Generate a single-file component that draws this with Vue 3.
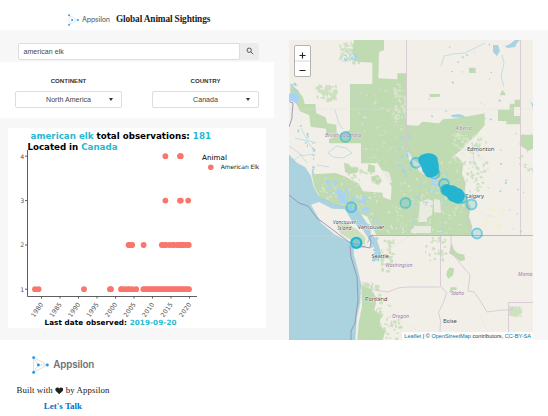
<script setup>
const years = [1980, 1985, 1990, 1995, 2000, 2005, 2010, 2015, 2020]
const yearX = (year) => 41.5 + (year - 1980) * 3.7
const span = (from, to, step) => {
  const out = []
  for (let x = from; x <= to; x += step) out.push(x)
  return out
}
const rows = [
  { n: 4, y: 156.2, xs: [165.4, 180, 180.8] },
  { n: 3, y: 200.6, xs: [165.4, 180, 180.8, 188.2] },
  { n: 2, y: 245, xs: [128.6, 129.6, 131.2, 132.2, 143.6, 161.8, 163.5, 166, 169.5, 172.5, 173.8, 177, 179, 180.8, 182.6, 184, 187, 188.8] },
  { n: 1, y: 289.2, xs: [35, 38.6, 84, 110, 111, 121, 122, 125, 128, 129.3, 132.4, 136.2, ...span(143.4, 189, 1.9), 189] },
]

/* deterministic scatter for forest texture and small lakes */
let seed = 11
const rnd = () => {
  seed = (seed * 16807) % 2147483647
  return seed / 2147483647
}
const scatter = (count, x, y, w, h, r) => {
  let d = ''
  for (let i = 0; i < count; i++) {
    const px = x + rnd() * w
    const py = y + rnd() * h
    const a = r * (0.4 + rnd())
    const b = r * (0.4 + rnd())
    d += `M${px.toFixed(1)} ${py.toFixed(1)}l${a.toFixed(1)} ${(b * 0.4).toFixed(1)} ${(-a * 0.3).toFixed(1)} ${b.toFixed(1)} ${(-a).toFixed(1)} ${(-b * 0.4).toFixed(1)}z`
  }
  return d
}
const clearings = scatter(80, 358, 88, 44, 75, 1.4) + scatter(110, 398, 155, 65, 78, 1.8) + scatter(50, 392, 83, 14, 36, 2.4) + scatter(60, 452, 130, 30, 30, 2.4) + scatter(90, 318, 176, 62, 46, 2) + scatter(30, 385, 205, 22, 28, 1.6)
const groves =
  scatter(65, 316, 84, 20, 14, 2.4) + scatter(55, 339, 41, 22, 20, 2.6) +
  scatter(60, 464, 135, 24, 55, 2.2) + scatter(70, 360, 282, 20, 56, 3.2) +
  scatter(26, 381, 238, 12, 32, 3) + scatter(35, 376, 304, 24, 34, 2.5) +
  scatter(30, 425, 236, 22, 24, 2.2) + scatter(24, 345, 165, 30, 14, 2.6) +
  scatter(16, 518, 132, 15, 40, 2.2) + scatter(45, 509, 306, 11, 9, 2.4)
const lakes =
  scatter(45, 415, 165, 33, 40, 1.7) + scatter(12, 398, 160, 14, 16, 2.2) +
  scatter(12, 396, 134, 14, 22, 2) + scatter(10, 343, 50, 12, 10, 2.4) +
  scatter(22, 420, 42, 112, 80, 1.5) + scatter(14, 480, 125, 50, 110, 1.4) +
  scatter(10, 290, 82, 6, 12, 2.4) + scatter(6, 295, 120, 14, 30, 2) + scatter(18, 370, 236, 6, 24, 2) + scatter(12, 312, 142, 2, 40, 2)
const deepLakes = scatter(16, 326, 178, 10, 14, 2.6) + scatter(22, 337, 186, 12, 14, 2.8) + scatter(22, 350, 194, 18, 16, 2.8) + scatter(10, 362, 208, 18, 18, 1.8) + scatter(14, 430, 176, 10, 10, 2)
const fields = scatter(28, 480, 205, 28, 24, 2.6) + scatter(14, 411, 252, 22, 32, 1.8) + scatter(6, 405, 272, 14, 16, 2)

const elkCluster = [
  [424, 160], [427, 159], [430, 159], [432, 160], [426, 163], [429, 163], [432, 163], [427, 166], [430, 166],
  [433, 165], [428, 169], [431, 169], [433, 168], [430, 172], [433, 171], [429, 161], [431, 165], [429, 168],
]
const parkCluster = [
  [447, 190], [449, 191], [451, 193], [453, 194], [455, 195], [457, 196], [459, 196], [452, 191], [455, 193],
  [458, 194], [453, 196], [456, 197], [458, 198], [454, 192], [450, 192], [457, 195],
]
const solid = [...elkCluster, ...parkCluster]
const rings = [[345.5, 137], [416, 162.7], [351.3, 207.3], [405.5, 203], [471.5, 204.5], [477, 233.5], [444, 184], [434.5, 173.5], [446, 190], [462, 198]]
</script>

<template>
  <div class="page">
    <header class="top">
      <svg class="mark" viewBox="0 0 32 34">
        <path d="M3 3v28L29 17zM3 3l9 14L3 31M12 17h17" />
        <circle cx="3" cy="3" r="2.7" /><circle cx="3" cy="31" r="2.7" /><circle cx="12" cy="17" r="2.7" /><circle cx="29" cy="17" r="2.7" />
      </svg>
      <span class="brand">Appsilon</span>
      <h1>Global Animal Sightings</h1>
    </header>

    <main class="body">
      <section class="side">
        <div class="search">
          <div class="field">american elk</div>
          <div class="go">
            <svg viewBox="0 0 10 10"><circle cx="4" cy="4" r="2.7" /><path d="M6 6l3 3" /></svg>
          </div>
        </div>
        <div class="filters">
          <div class="filter">
            <label>CONTINENT</label>
            <div class="select"><span>North America</span><i></i></div>
          </div>
          <div class="filter">
            <label>COUNTRY</label>
            <div class="select"><span>Canada</span><i></i></div>
          </div>
        </div>
        <div class="card">
          <svg class="chart" viewBox="8 128 258 200">
            <g class="title">
              <text x="30.5" y="139" textLength="180.500">  <tspan class="hl">american elk</tspan> total observations: <tspan class="hl">181</tspan></text>
              <text x="27.5" y="150" textLength="90">Located in <tspan class="hl">Canada</tspan></text>
            </g>
            <path class="axis" d="M27.5 150v146.5H197" />
            <g v-for="row in rows" :key="row.n">
              <path class="axis" :d="`M25 ${row.y}h2.5`" />
              <text class="tick" x="24.3" :y="row.y + 2.4" text-anchor="end">{{ row.n }}</text>
              <circle v-for="(x, i) in row.xs" :key="i" class="dot" :cx="x" :cy="row.y" r="2.9" />
            </g>
            <g v-for="year in years" :key="year">
              <path class="axis" :d="`M${yearX(year)} 296.5v2`" />
              <text class="tick" text-anchor="end" :transform="`translate(${yearX(year) + 2} 304.5) rotate(-55)`">{{ year }}</text>
            </g>
            <text class="legend" x="202" y="160" textLength="25">Animal</text>
            <circle class="dot" cx="210.8" cy="167.2" r="2.8" />
            <text class="entry" x="220.7" y="169.2" textLength="38.5">American Elk</text>
            <text class="caption" x="44.5" y="325" textLength="132">Last date observed: <tspan class="hl">2019-09-20</tspan></text>
          </svg>
        </div>
      </section>

      <section class="map">
        <svg class="tiles" viewBox="289 40 244 300">
          <rect class="land" x="289" y="40" width="244" height="300" />
          <g transform="translate(289 40) scale(.33333)">
            <path class="wood" d="M195 0H285V30L270 36 268 115 325 118V100H352V255L388 257 400 245 450 250 462 238 510 234 587 220V255L562 285 540 305 522 325 498 345 524 368 519 400 530 430 526 465 545 500 540 530 550 560 545 586H262L250 560 235 530 190 510 130 492 92 470 76 440 68 403 140 399 170 410 208 430 222 454 280 458 282 472 305 480 308 440 290 410 266 370H216V310H120V297L150 285 183 270V132H250V68L205 65 190 38z" />
            <path class="wood" d="M5 130l22 22 15 20 5 20h32l3 28 28 12 4 18 28 4 2 42-30-8-3-22-46-6-4-34-28-12-14-28-16-8zM165 368l15 4 6 12 22-2-4 16-22 4-14-6zM238 372l20 6 0 20-22-4zM245 410l22-6 12 18-10 14-16-8zM627 209h35v-18h15v-12h17v22h-19v27h19v25h-42v-10h-25zM695 284h37v42l-14 6-23-14zM540 83h20v16h-20zM421 162h32v8l-30 2zM640 150l10 12-2 4h-16zM218 740l28 6 18 30-8 34 20 20-6 26 20 16-10 28H205l4-50 10-50zM474 694l8-12 14 4-4 20-14 10-6-10zM480 640l8-30 8 20 10 10 20 4 2 16-14 4-16-14zM485 742h18v8h-12v8h-10z" />
          </g>
          <path class="grove" :d="groves" />
          <path class="clear" :d="clearings" />
          <path class="clear solid" d="M420 202l8-3 5 2-1 14-5 3v4h-9zM434 199l6 1 1 13-7-1zM411 230l4-4h16v7h-20zM407 147l6 12 16 10 10 11-4 1-15-9-11-12zM381 170l8 2 3 10-5 3z" />
          <path class="field-patch" :d="fields" />
          <g transform="translate(289 40) scale(.33333)">
            <path class="sea" d="M0 345L25 370 48 382 65 408 73 440 88 468 130 490 182 504 214 520 230 545 243 560 245 584 262 596 276 640 268 665 260 645 256 620 243 600 225 622 193 624 194 645 206 690 215 728 213 790 203 830 198 900H0z" />
            <path class="isle" d="M66 494L90 486 130 506 168 508 190 545 222 570 238 595 233 614 212 622 180 605 135 582 97 550 78 515z" />
            <path class="wood soft" d="M142 552l30-2 34 20 24 24-2 18-16 6-30-20-28-18z" />
          </g>
          <path class="water" :d="lakes" />
          <path class="deep" :d="deepLakes" />
          <path class="deep" d="M289 94l8-1 3 5-3 6-5-3-3 1z" />
          <path class="water" d="M493 45h5l2 6-3 5-4-4zM515 40h5l-3 3-2 4-8 1-2-2 5-2zM451 115l8-1 6 2-1 2-12-1zM530 101l3 3v4z" />
          <path class="river" d="M350 86l5 11 9 13 6 11M364 110l12-5 14 1M335 110l4 14 4 5M328 153l8-7 10 2 6 5-9 5-10-1zM295 138l12 3 6 8M301 128l6 12 9 3M301 156l12-2M317 165l12 2M294 160l8-6M441 66l3-10 9-2 12-1 10-5 10-5M502 55l2 8-3 14 3 10M289 146l10 7 8 10M472 142l2 20M416 195l-3 20v14M444 215l-2 20" />
          <path class="minor" d="M289 109h244M289 236h72M461 197l13 13 23 8M375 252l20-6 14-10M420 210l-2 22M400 320l20 12M480 315l10 22" />
          <path class="border" d="M406.500 40V147L413 159 424 166 436 178 446 190 458 203 467 211 469 225 472 236M520.500 40V236" />
          <path class="border strong" d="M371 235.500H533" />
          <path class="border" d="M362 283h6l6 7 14 2 10-4 10-1h31.500M440.500 236v50.500l6 6-3 10-5 10 2 8-1 20M451 236v15l7 10 12 14-2 16 6 1 7 10 6 10 15-2 10 0 0-3 5 0M508.500 340V302.500H533" />
          <path class="shore" d="M289 195l10 8 9 3 9 12 16 12 16 12 16 5 5 1 1-7-2-4 4-2M350 246l1 11 6 20 1 23-3 23-4 8v9M290 102l3 1-1 12 0 3-3 9" />
          <g class="region">
            <text x="325" y="137" textLength="36">British Columbia</text>
            <text x="455.500" y="130" textLength="16">Alberta</text>
            <text x="385.500" y="267" textLength="27">Washington</text>
            <text x="392" y="318" textLength="17">Oregon</text>
            <text x="451.500" y="295" textLength="12.500">Idaho</text>
            <text x="518" y="276">Monta</text>
          </g>
          <g class="city">
            <text x="467" y="151" textLength="27.500">Edmonton</text>
            <text x="465" y="198" textLength="19">Calgary</text>
            <text x="357.500" y="229.300" textLength="27">Vancouver</text>
            <text class="small" x="333" y="224" textLength="23">Vancouver</text>
            <text class="small" x="337.500" y="230" textLength="14">Island</text>
            <text x="371.500" y="258" textLength="17.500">Seattle</text>
            <text x="365" y="300.500" textLength="22.500">Portland</text>
            <text x="443" y="323" textLength="14">Boise</text>
          </g>
          <g class="cluster">
            <circle v-for="(p, i) in solid" :key="i" :cx="p[0]" :cy="p[1]" r="4.900" />
          </g>
          <g class="sighting">
            <circle v-for="(p, i) in rings" :key="i" :cx="p[0]" :cy="p[1]" r="5" />
            <circle class="busy" cx="356.300" cy="242.800" r="5" />
          </g>
        </svg>
        <div class="zoom">
          <svg viewBox="0 0 15 30"><path d="M7.500 6.500v6M4.500 9.500h6M4.500 24.500h6" /><path class="split" d="M0 15h15" /></svg>
        </div>
        <div class="credit"><a>Leaflet</a> | © <a>OpenStreetMap</a> contributors, <a>CC-BY-SA</a></div>
      </section>
    </main>

    <footer class="foot">
      <div class="logo">
        <svg class="mark" viewBox="0 0 32 34">
          <path d="M3 3v28L29 17zM3 3l9 14L3 31M12 17h17" />
          <circle cx="3" cy="3" r="2.7" /><circle cx="3" cy="31" r="2.7" /><circle cx="12" cy="17" r="2.7" /><circle cx="29" cy="17" r="2.7" />
        </svg>
        <span class="brand">Appsilon</span>
      </div>
      <p>Built with <svg class="heart" viewBox="0 0 10 9"><path d="M5 8.600L.9 4.700C-.5 2.600.8.500 2.700.5 3.800.5 4.600 1.100 5 1.900 5.400 1.100 6.200.5 7.300.5 9.200.5 10.500 2.600 9.100 4.700z" /></svg> by Appsilon</p>
      <a class="talk">Let's Talk</a>
    </footer>
  </div>
</template>

<style>
body { margin: 0; background: #fff; overflow: hidden; }
</style>

<style scoped>
.page { width: 548px; height: 416px; font-family: "Liberation Sans", Arial, sans-serif; color: #333; overflow: hidden; }
.page * { box-sizing: border-box; }
.top { height: 30px; display: flex; align-items: center; padding: 9px 0 0 68px; }
.mark { fill: #1996f0; flex: none; }
.mark path { fill: none; stroke: #b9c3c9; stroke-width: 1; }
.top .mark { width: 11px; height: 12px; }
.brand { color: #6b737a; font-family: Inter, sans-serif; font-weight: 500; }
.top .brand { font-size: 7px; margin-left: 3px; width: 34px; letter-spacing: -.2px; white-space: nowrap; }
h1 { margin: -1px 0 0; font: bold 9.3px/12px "Liberation Serif", serif; letter-spacing: -.13px; color: #222; white-space: nowrap; }
.body { height: 310px; display: flex; background: #f7f7f7; }
.side { width: 274px; flex: none; }
.search { height: 32px; display: flex; padding: 12.5px 15px 2.500px 17.500px; }
.field { flex: 1; height: 17px; border: 1px solid #ddd; border-radius: 2px 0 0 2px; background: #fff; font-size: 7px; line-height: 16px; padding-left: 5px; letter-spacing: .05px; color: #444; }
.go { width: 19px; height: 17px; background: #ececec; border-radius: 0 2px 2px 0; display: flex; align-items: center; justify-content: center; }
.go svg { width: 8px; height: 8px; fill: none; stroke: #444; stroke-width: 1.100; }
.filters { height: 56px; background: #fff; display: flex; justify-content: space-between; padding: 14px 15px 0; }
.filter { width: 107px; }
.filter label { display: block; height: 15px; font-size: 6.100px; font-weight: bold; line-height: 10px; text-align: center; }
.select { height: 17px; border: 1px solid #ddd; border-radius: 2px; display: flex; align-items: center; font-size: 7.100px; position: relative; color: #444; justify-content: center; }
.select i { position: absolute; right: 8px; top: 6px; border: 2.500px solid transparent; border-top: 3px solid #333; border-bottom: 0; }
.card { margin: 10px 0 0 8px; width: 258px; height: 200px; background: #fff; }
.chart { display: block; width: 258px; height: 200px; font-family: "DejaVu Sans", Verdana, sans-serif; }
.title { font-size: 8.700px; font-weight: bold; fill: #000; }
.hl { fill: #27b8d2; }
.axis { fill: none; stroke: #4d4d4d; stroke-width: .9; }
.tick { font-size: 6.300px; fill: #555; }
.dot { fill: #f8766d; }
.legend { font-size: 7.200px; fill: #000; }
.entry { font-size: 6px; fill: #222; }
.caption { font-size: 7.200px; font-weight: bold; fill: #000; }
.map { position: relative; margin: 10px 0 0 15px; width: 244px; height: 300px; overflow: hidden; }
.tiles { display: block; width: 244px; height: 300px; font-family: "Noto Sans", sans-serif; }
.land { fill: #f2efe9; }
.wood { fill: #c0dbb2; }
.wood.soft { opacity: .8; }
.grove { fill: #c0dbb2; opacity: .75; }
.clear { fill: #e8ebdc; opacity: .55; }
.clear.solid { fill: #f0ede7; opacity: .85; }
.field-patch { fill: #f2eed8; }
.sea { fill: #aad3df; stroke: #9cc6d5; stroke-width: 1; }
.isle { fill: #f2efe9; }
.water { fill: #a9d3e3; }
.deep { fill: #a9d2f3; }
.river { fill: none; stroke: #b1d5df; stroke-width: .7; }
.minor { fill: none; stroke: #e2ddd9; stroke-width: .6; opacity: .6; }
.border { fill: none; stroke: #d3c4d0; stroke-width: .8; }
.border.strong { stroke: #c3b1c1; stroke-width: 1.200; }
.shore { fill: none; stroke: #9890b2; stroke-width: .9; }
.region { font-size: 5px; font-style: italic; fill: #9976a5; }
.city { font-size: 6px; fill: #444; paint-order: stroke; stroke: #fff; stroke-width: .7; }
.region text { paint-order: stroke; stroke: #f7f4ef; stroke-width: .5; }
.city .small { font-size: 5px; font-style: italic; }
.cluster { fill: #22b4d1; stroke: #22b4d1; stroke-width: 1.800; opacity: .97; }
.sighting { fill: #22b4d1; fill-opacity: .2; stroke: #22b4d1; stroke-opacity: .55; stroke-width: 1.900; }
.sighting .busy { fill-opacity: .45; stroke-opacity: 1; stroke-width: 2.300; }
.zoom { position: absolute; left: 5px; top: 5px; width: 17px; height: 32px; border: 1px solid #b6b3af; border-radius: 2px; background: #fff; }
.zoom svg { display: block; width: 15px; height: 30px; fill: none; stroke: #222; stroke-width: 1.100; }
.zoom .split { stroke: #ccc; stroke-width: .8; }
.credit { position: absolute; right: 0; bottom: 0; height: 8px; padding: 0 2px; background: rgba(255, 255, 255, .8); font-size: 5.600px; line-height: 8px; white-space: nowrap; color: #333; }
.credit a { color: #0078a8; }
.foot { width: 126px; height: 76px; display: flex; flex-direction: column; align-items: center; font: 8.900px/12px "Liberation Serif", serif; color: #222; }
.logo { display: flex; align-items: center; height: 18px; margin-top: 16px; }
.logo .mark { width: 17px; height: 18px; }
.logo .brand { font-size: 9.800px; font-weight: 600; margin-left: 4.500px; letter-spacing: -.1px; }
.foot p { margin: 10px 0 0; height: 12px; white-space: nowrap; letter-spacing: .05px; }
.heart { width: 8.500px; height: 7.500px; fill: #222; vertical-align: -1px; }
.talk { margin-top: 4px; color: #0072ce; font-weight: bold; font-size: 9px; }
</style>
